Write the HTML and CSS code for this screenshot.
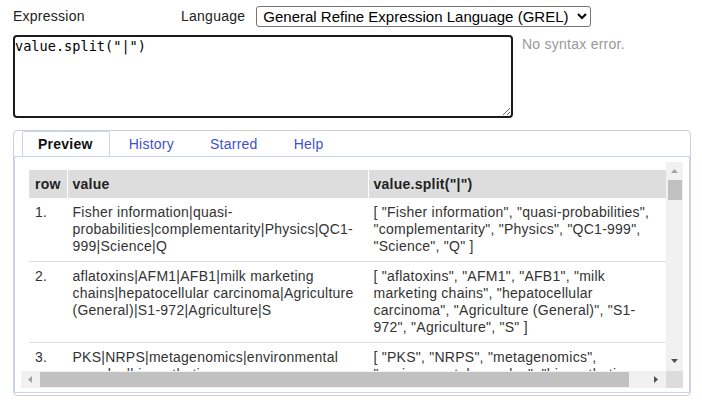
FILE: index.html
```html
<!DOCTYPE html>
<html>
<head>
<meta charset="utf-8">
<link rel="stylesheet" href="styles.css">
</head>
<body>
<div class="dialog">
  <div class="top">
    <div class="expr-col">
      <div class="label-row">
        <span class="expr-label">Expression</span>
        <span class="lang-label">Language</span>
        <select class="lang-select">
          <option>General Refine Expression Language (GREL)</option>
          <option>Python / Jython</option>
          <option>Clojure</option>
        </select>
      </div>
      <textarea class="expr-input" spellcheck="false">value.split("|")</textarea>
    </div>
    <div class="status">No syntax error.</div>
  </div>

  <div class="tabs">
    <ul class="tab-nav">
      <li class="tab active">Preview</li>
      <li class="tab">History</li>
      <li class="tab">Starred</li>
      <li class="tab">Help</li>
    </ul>
    <div class="tab-panel">
      <div class="viewport">
        <div class="content">
          <table class="preview">
            <colgroup>
              <col class="c-row">
              <col class="c-val">
              <col class="c-res">
            </colgroup>
            <thead>
              <tr><th>row</th><th>value</th><th>value.split("|")</th></tr>
            </thead>
            <tbody>
              <tr><td>1.</td><td>Fisher information|quasi-probabilities|complementarity|Physics|QC1-999|Science|Q</td><td>[ "Fisher information", "quasi-probabilities", "complementarity", "Physics", "QC1-999", "Science", "Q" ]</td></tr>
              <tr><td>2.</td><td>aflatoxins|AFM1|AFB1|milk marketing chains|hepatocellular carcinoma|Agriculture (General)|S1-972|Agriculture|S</td><td>[ "aflatoxins", "AFM1", "AFB1", "milk marketing chains", "hepatocellular carcinoma", "Agriculture (General)", "S1-972", "Agriculture", "S" ]</td></tr>
              <tr><td>3.</td><td>PKS|NRPS|metagenomics|environmental samples|biosynthetic gene clusters|Microbiology|QR1-502|Science|Q</td><td>[ "PKS", "NRPS", "metagenomics", "environmental samples", "biosynthetic gene clusters", "Microbiology", "QR1-502", "Science", "Q" ]</td></tr>
              <tr><td>4.</td><td>graphene|supercapacitor|electrode materials|Chemistry|QD1-999|Science|Q</td><td>[ "graphene", "supercapacitor", "electrode materials", "Chemistry", "QD1-999", "Science", "Q" ]</td></tr>
              <tr><td>5.</td><td>machine learning|random forest|land cover classification|Environmental sciences|GE1-350|Geography. Anthropology. Recreation|G</td><td>[ "machine learning", "random forest", "land cover classification", "Environmental sciences", "GE1-350", "Geography. Anthropology. Recreation", "G" ]</td></tr>
            </tbody>
          </table>
        </div>
        <div class="vbar">
          <div class="sb-btn">
            <svg width="7" height="4" viewBox="0 0 7 4"><polygon points="0,4 3.5,0 7,4" fill="#a3a3a3"/></svg>
          </div>
          <div class="vtrack"><div class="vthumb"></div></div>
          <div class="sb-btn down">
            <svg width="7" height="4" viewBox="0 0 7 4"><polygon points="0,0 7,0 3.5,4" fill="#505050"/></svg>
          </div>
        </div>
        <div class="hbar">
          <div class="sb-btn">
            <svg width="4" height="7" viewBox="0 0 4 7"><polygon points="4,0 4,7 0,3.5" fill="#a3a3a3"/></svg>
          </div>
          <div class="htrack"><div class="hthumb"></div></div>
          <div class="sb-btn right">
            <svg width="4" height="7" viewBox="0 0 4 7"><polygon points="0,0 4,3.5 0,7" fill="#505050"/></svg>
          </div>
        </div>
        <div class="corner"></div>
      </div>
    </div>
  </div>
</div>
</body>
</html>
```

FILE: styles.css
```css
* { box-sizing: border-box; }

html, body {
  margin: 0;
  padding: 0;
  background: #fff;
}

body {
  font-family: "Liberation Sans", Arial, sans-serif;
  font-size: 14px;
  letter-spacing: 0.25px;
  color: #222;
}

.dialog {
  width: 702px;
  height: 402px;
  padding: 6px 11px 0 13px;
}

.top {
  display: flex;
  align-items: flex-start;
}

.expr-col {
  width: 500px;
  flex: none;
}

.label-row {
  display: flex;
  align-items: center;
  height: 20px;
  white-space: nowrap;
}

.expr-label {
  width: 168px;
  flex: none;
}

.lang-label {
  margin-right: 11px;
}

.lang-select {
  flex: none;
  width: 335px;
  height: 21px;
  font-family: "Liberation Sans", Arial, sans-serif;
  font-size: 15px;
  color: #000;
  padding: 0 2px;
  border: 1px solid #767676;
  border-radius: 3px;
  background: #fff;
}

.expr-input {
  display: block;
  margin-top: 9px;
  width: 500px;
  height: 83px;
  border: 2px solid #1b1b1b;
  border-radius: 4px;
  padding: 1px 1px 1px 0;
  font-family: "DejaVu Sans Mono", "Liberation Mono", monospace;
  font-size: 13.6px;
  letter-spacing: 0;
  color: #000;
  line-height: 17px;
  outline: none;
}

.status {
  margin-top: 30px;
  padding-left: 9px;
  color: #999;
  white-space: nowrap;
}

.tabs {
  margin-top: 12px;
  width: 678px;
  height: 266px;
  border: 1px solid #cfcfcf;
  border-radius: 4px;
  display: flex;
  flex-direction: column;
}

.tab-nav {
  list-style: none;
  margin: 0;
  padding: 0 0 0 8px;
  height: 25px;
  display: flex;
  flex: none;
}

.tab {
  padding: 0 16px 0 15px;
  margin-right: 3px;
  line-height: 24px;
  color: #3f51d0;
  border: 1px solid transparent;
  border-bottom: none;
  border-top-left-radius: 2px;
  border-top-right-radius: 2px;
}

.tab.active {
  color: #111;
  font-weight: bold;
  border-color: #c6d4f5;
  background: #fff;
}

.tab-panel {
  flex: none;
  height: 237px;
  border: 1px solid #c6d4f5;
  padding: 5px 6px 4px 6px;
}

/* preview area with its scrollbars */
.viewport {
  width: 662px;
  height: 226px;
  display: grid;
  grid-template-columns: 645px 17px;
  grid-template-rows: 209px 17px;
}

.content {
  overflow: hidden;
  padding: 8px 0 0 8px;
}

.vbar,
.hbar {
  background: #f1f1f1;
  display: flex;
}

.vbar {
  flex-direction: column;
}

.sb-btn {
  flex: none;
  width: 17px;
  height: 17px;
  display: flex;
  align-items: center;
  justify-content: center;
}

.sb-btn svg {
  display: block;
}

.sb-btn.down {
  align-items: flex-start;
  padding-top: 5px;
}

.sb-btn.right {
  justify-content: flex-start;
  padding-left: 5px;
}

.vtrack {
  flex: 1;
  padding: 1px 1px 0 2px;
}

.vthumb {
  height: 20px;
  background: #c1c1c1;
}

.htrack {
  flex: 1;
  padding: 0 0 0 2px;
  display: flex;
  align-items: center;
}

.hthumb {
  width: 589px;
  height: 15px;
  background: #c1c1c1;
}

.corner {
  background: #dcdcdc;
}

.preview {
  border-collapse: collapse;
  table-layout: fixed;
  width: 640px;
  line-height: 17px;
}

.c-row { width: 38px; }
.c-val { width: 301px; }
.c-res { width: 301px; }

.preview th {
  background: #dddddd;
  font-weight: bold;
  text-align: left;
  padding: 6px 5px 5px 5px;
  color: #222;
  border-left: 1px solid #fff;
}

.preview th:first-child,
.preview td:first-child {
  border-left: none;
  padding-left: 6px;
}

.preview td {
  vertical-align: top;
  padding: 6px 5px 6px 5px;
  border-left: 1px solid #fff;
  border-bottom: 1px solid #dedede;
  color: #333;
}
```
